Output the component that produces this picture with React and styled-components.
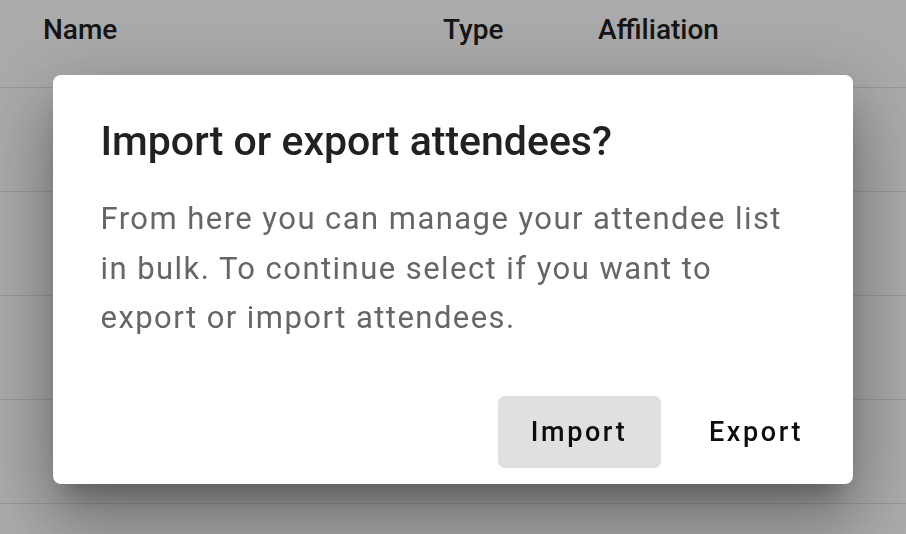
import React from 'react'
import styled, { createGlobalStyle } from 'styled-components'

const GlobalStyle = createGlobalStyle`
  html, body {
    margin: 0;
    padding: 0;
    background: #fff;
    font-family: Roboto, 'Noto Sans', 'Liberation Sans', sans-serif;
    overflow: hidden;
  }
`

const attendees = [
  { id: 1, name: 'Maria Lopez', type: 'Speaker', affiliation: 'ACME Corp' },
  { id: 2, name: 'Victor Hale', type: 'Guest', affiliation: 'Northwind' },
  { id: 3, name: 'Vera Quinn', type: 'Guest', affiliation: 'Globex' },
  { id: 4, name: 'Sam Ortiz', type: 'Staff', affiliation: 'Initech' }
]

const App = () => (
  <Page>
    <GlobalStyle />
    <Table>
      <HeadRow>
        <HeadCell>Name</HeadCell>
        <HeadCell>Type</HeadCell>
        <HeadCell>Affiliation</HeadCell>
      </HeadRow>
      {attendees.map(a => (
        <Row key={a.id}>
          <Cell>{a.name}</Cell>
          <Cell>{a.type}</Cell>
          <Cell>{a.affiliation}</Cell>
        </Row>
      ))}
    </Table>

    <Backdrop>
      <Dialog role='dialog'>
        <Title>Import or export attendees?</Title>
        <Content>
          From here you can manage your attendee list in bulk. To continue
          select if you want to export or import attendees.
        </Content>
        <Actions>
          <Button $filled>Import</Button>
          <Button>Export</Button>
        </Actions>
      </Dialog>
    </Backdrop>
  </Page>
)

export default App

const Page = styled.div`
  position: relative;
  width: 906px;
  height: 534px;
  overflow: hidden;
`

const Table = styled.div`
  display: flex;
  flex-direction: column;
`

const HeadRow = styled.div`
  display: grid;
  grid-template-columns: 400px 155px 1fr;
  padding: 10px 0 0 43px;
  height: 77px;
  border-bottom: 1px solid #e3e3e3;
`

const HeadCell = styled.div`
  font-size: 28px;
  line-height: 40px;
  font-weight: 500;
  color: #212121;
`

const Row = styled.div`
  display: grid;
  grid-template-columns: 400px 155px 1fr;
  align-items: center;
  padding-left: 60px;
  height: 103px;
  border-bottom: 1px solid #e3e3e3;
`

const Cell = styled.div`
  font-size: 24px;
  color: #333;
`

const Backdrop = styled.div`
  position: fixed;
  inset: 0;
  background: rgba(0, 0, 0, 0.33);
  display: flex;
  justify-content: center;
  align-items: flex-start;
  padding-top: 75px;
`

const Dialog = styled.div`
  width: 800px;
  height: 409px;
  box-sizing: border-box;
  margin-left: -1px;
  background: #fff;
  border-radius: 8px;
  display: flex;
  flex-direction: column;
  box-shadow: 0 19px 26px -12px rgba(0, 0, 0, 0.3),
    0 42px 66px 5px rgba(0, 0, 0, 0.2), 0 16px 80px 14px rgba(0, 0, 0, 0.16);
`

const Title = styled.h2`
  margin: 0;
  padding: 42px 48px 0 48px;
  font-size: 41px;
  line-height: 48px;
  font-weight: 500;
  color: #212121;
`

const Content = styled.p`
  margin: 29px 0 0;
  padding: 0 48px 0 48px;
  font-size: 31px;
  line-height: 49.5px;
  letter-spacing: 1.45px;
  color: #666;
`

const Actions = styled.div`
  margin-top: auto;
  display: flex;
  justify-content: flex-end;
  gap: 14px;
  padding: 0 15px 16px;
`

const Button = styled.button`
  width: 163px;
  height: 72px;
  border: 0;
  border-radius: 7px;
  background: ${p => (p.$filled ? '#e0e0e0' : 'transparent')};
  font-family: inherit;
  font-size: 27px;
  font-weight: 500;
  letter-spacing: 2.6px;
  color: #0d0d0d;
  cursor: pointer;
`
